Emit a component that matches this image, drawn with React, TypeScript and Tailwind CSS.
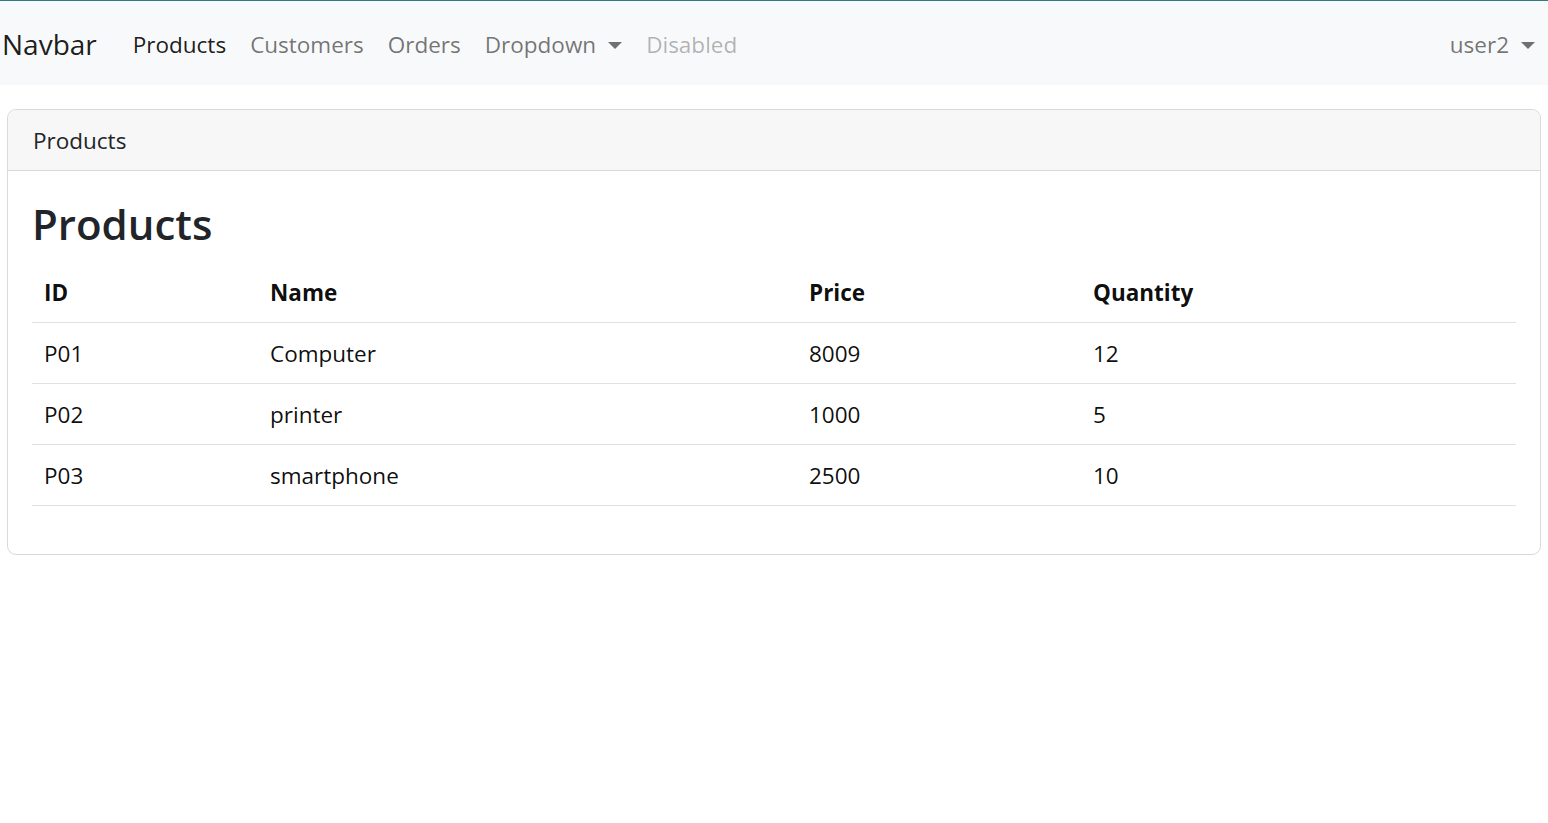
import { useState } from "react";

type Product = { id: string; name: string; price: number; quantity: number };

const products: Product[] = [
  { id: "P01", name: "Computer", price: 8009, quantity: 12 },
  { id: "P02", name: "printer", price: 1000, quantity: 5 },
  { id: "P03", name: "smartphone", price: 2500, quantity: 10 },
];

const navLinks = [
  { label: "Products", state: "active" },
  { label: "Customers", state: "normal" },
  { label: "Orders", state: "normal" },
];

function Caret() {
  return (
    <span className="ml-[12px] inline-block h-0 w-0 border-x-[7px] border-t-[7px] border-x-transparent border-t-current align-[4px]" />
  );
}

function Navbar() {
  const [active] = useState("Products");

  return (
    <nav className="flex h-[85px] items-center border-t border-[#2f7c80] bg-[#f8f9fa] pr-[1px] pt-[3px]">
      <a href="#" className="mr-[24px] pl-[2px] text-[28px] leading-[45px] text-[rgba(0,0,0,0.9)]">
        Navbar
      </a>
      <ul className="flex items-center">
        {navLinks.map((link) => (
          <li key={link.label}>
            <a
              href="#"
              className={
                link.label === active
                  ? "block px-[12px] py-[12px] leading-[36px] text-[rgba(0,0,0,0.9)]"
                  : "block px-[12px] py-[12px] leading-[36px] text-[rgba(0,0,0,0.55)]"
              }
            >
              {link.label}
            </a>
          </li>
        ))}
        <li>
          <a href="#" className="block px-[12px] py-[12px] leading-[36px] text-[rgba(0,0,0,0.55)]">
            Dropdown
            <Caret />
          </a>
        </li>
        <li>
          <span className="block px-[12px] py-[12px] leading-[36px] text-[rgba(0,0,0,0.3)]">Disabled</span>
        </li>
      </ul>
      <div className="ml-auto">
        <a href="#" className="block px-[12px] py-[12px] leading-[36px] text-[rgba(0,0,0,0.55)]">
          user2
          <Caret />
        </a>
      </div>
    </nav>
  );
}

function ProductsCard() {
  return (
    <div className="mx-[7px] mt-[24px] rounded-[9px] border border-[#d9d9d9]">
      <div className="rounded-t-[9px] border-b border-[#d9d9d9] bg-[#f7f7f7] px-[25px] pb-[11px] pt-[13px] leading-[36px] text-[#212529]">
        Products
      </div>
      <div className="p-[24px]">
        <h2 className="mb-[12px] pt-[2px] text-[42px] font-semibold leading-[53px] text-[#212529]">Products</h2>
        <table className="mb-[24px] w-full border-collapse text-left text-[rgba(0,0,0,0.95)]">
          <thead>
            <tr className="border-b border-[#dee2e6]">
              <th className="w-[226px] px-[12px] pb-[11px] pt-[13px] font-bold leading-[36px]">ID</th>
              <th className="w-[539px] px-[12px] pb-[11px] pt-[13px] font-bold leading-[36px]">Name</th>
              <th className="w-[284px] px-[12px] pb-[11px] pt-[13px] font-bold leading-[36px]">Price</th>
              <th className="px-[12px] pb-[11px] pt-[13px] font-bold leading-[36px]">Quantity</th>
            </tr>
          </thead>
          <tbody>
            {products.map((p) => (
              <tr key={p.id} className="border-b border-[#dee2e6]">
                <td className="px-[12px] pb-[11px] pt-[13px] leading-[36px]">{p.id}</td>
                <td className="px-[12px] pb-[11px] pt-[13px] leading-[36px]">{p.name}</td>
                <td className="px-[12px] pb-[11px] pt-[13px] leading-[36px]">{p.price}</td>
                <td className="px-[12px] pb-[11px] pt-[13px] leading-[36px]">{p.quantity}</td>
              </tr>
            ))}
          </tbody>
        </table>
      </div>
    </div>
  );
}

export default function App() {
  return (
    <main className="min-h-screen bg-white font-['Open_Sans',sans-serif] text-[22.5px] text-[#212529]">
      <Navbar />
      <ProductsCard />
    </main>
  );
}
